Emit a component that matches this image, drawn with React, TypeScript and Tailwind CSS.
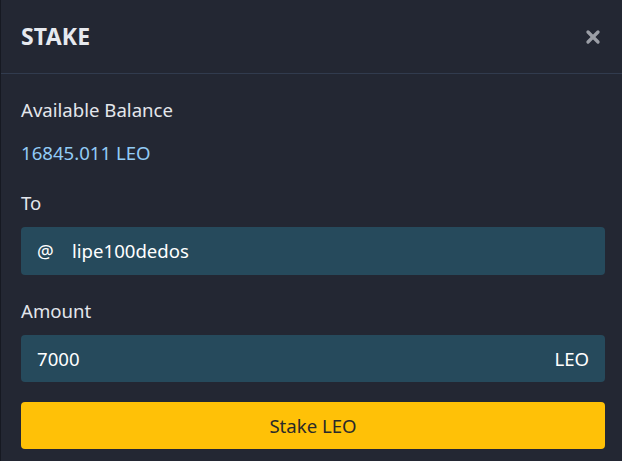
import { X } from "lucide-react"

export default function App() {
  return (
    <div
      className="h-[461px] w-[622px] overflow-hidden border-l border-[#161922] bg-[#232733] text-[#e3e6ec]"
      style={{ fontFamily: '"Noto Sans", "Open Sans", sans-serif' }}
    >
      <div className="flex h-[74px] items-center justify-between border-b border-[#313b4e] pl-[20px] pr-[19px]">
        <h1 className="text-[23px] font-bold leading-none tracking-[0.2px] text-[#e6e9ef]">STAKE</h1>
        <button className="text-[#9b9ea6]">
          <X size={20} strokeWidth={4} />
        </button>
      </div>

      <div className="pl-[20px] pr-[17px] pt-[22px]">
        <p className="text-[18.6px] leading-[28px]">Available Balance</p>
        <p className="mt-[15px] text-[18.6px] leading-[28px] text-[#92cbf6]">16845.011 LEO</p>

        <p className="mt-[22px] text-[18.6px] leading-[28px]">To</p>
        <div className="mt-[10px] flex h-[48px] items-center rounded-[4px] bg-[#264a5c] pl-[16px] text-[18.6px] text-white">
          <span className="w-[35px]">@</span>
          <span>lipe100dedos</span>
        </div>

        <p className="mt-[22px] text-[18.6px] leading-[28px]">Amount</p>
        <div className="mt-[10px] flex h-[47px] items-center justify-between rounded-[4px] bg-[#264a5c] px-[16px] text-[18.6px] text-white">
          <span>7000</span>
          <span>LEO</span>
        </div>

        <button className="mt-[20px] flex h-[47px] w-full items-center justify-center rounded-[4px] bg-[#ffc107] text-[18.6px] text-[#2a2a2a]">
          Stake LEO
        </button>
      </div>
    </div>
  )
}
